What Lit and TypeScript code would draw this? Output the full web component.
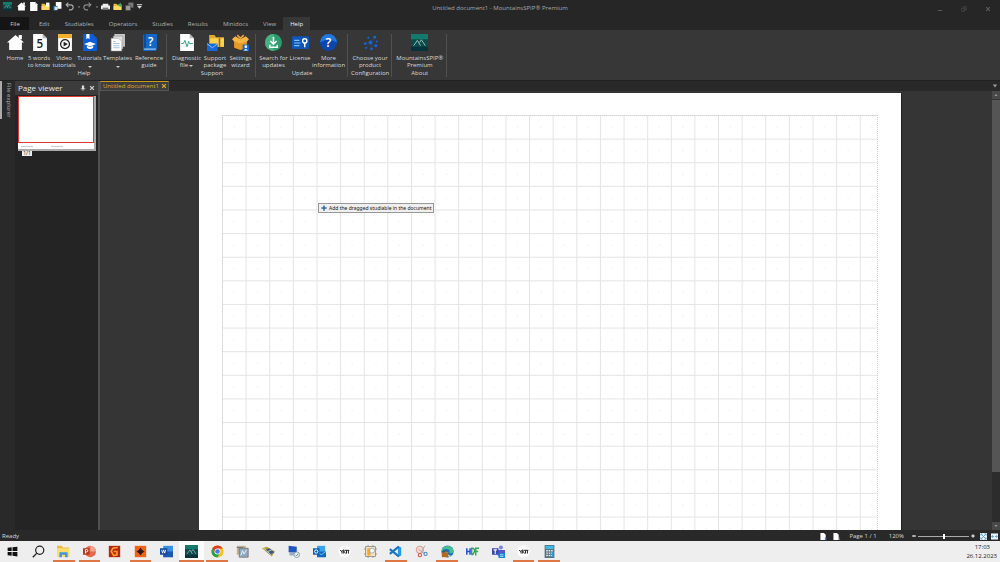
import { LitElement, html, svg, css, nothing } from "lit";
import { customElement, property } from "lit/decorators.js";
import { classMap } from "lit/directives/class-map.js";
import { styleMap } from "lit/directives/style-map.js";

const doc = svg`<path d="M2 0h9l4 4v12H2z" fill="#fff"/><path d="M11 0v4h4z" fill="#b8b8b8"/>`;
const folder = svg`<path d="M1 3h5l2 2h7v9H1z" fill="#e9b93c"/><path d="M1 7h14v7H1z" fill="#ffd866"/>`;
const peaks = svg`<rect width="16" height="16" fill="#0c4a4c"/><path d="M0 0h16v5H0z" fill="#147a6c"/><path d="M0 12h16v4H0z" fill="#07343c"/><path d="M2.500 11L6 6l3 5M8 8l1.800-2.500L13.500 11" fill="none" stroke="#a9cfc8" stroke-width=".8"/>`;
const artmark = svg`<circle cx="8" cy="8" r="7.5" fill="#fff"/><path d="M2.500 6.500L5 8v2.500M4.500 8L7 6v4.500M7 7.500l2.500 3M8 6.500h6M10.500 6.500v4M12.800 6.500v4" fill="none" stroke="#222" stroke-width="1.2"/>`;

const icons: Record<string, unknown> = {
  app: peaks,
  home: svg`<path d="M8 1L0 8h2v7h12V8h2z" fill="#fff"/><path d="M11 1h3v4h-3z" fill="#fff"/>`,
  doc,
  open: svg`${folder}<path d="M9 1h6v7H9z" fill="#fff"/>`,
  openDoc: svg`<path d="M5 0h10v12H5z" fill="#fff"/><path d="M1 7h7v8H1z" fill="#3f87c7"/><path d="M3 9h5v5H3z" fill="#d9eaf8"/>`,
  undo: svg`<path d="M2 5h8a4.500 4.500 0 0 1 0 9H7M6 1L2 5l4 4" fill="none" stroke="#aaa" stroke-width="2"/>`,
  redo: svg`<path d="M14 5H6a4.500 4.500 0 0 0 0 9h3M10 1l4 4-4 4" fill="none" stroke="#888" stroke-width="2"/>`,
  caret: svg`<path d="M3 6h10l-5 6z" fill="#999"/>`,
  print: svg`<path d="M3 3h10v3h3v7H0V6h3z" fill="#eee"/><path d="M3 10h10v4H3z" fill="#777"/>`,
  folderGo: svg`${folder}<path d="M9 5l5-4v3h2v4h-4z" fill="#3ba55a"/>`,
  windows: svg`<path d="M6 1h9v9H6z" fill="#777"/><path d="M1 6h9v9H1z" fill="#999" stroke="#444"/>`,
  more: svg`<path d="M2 2h12v2H2zM2 6h12l-6 7z" fill="#ddd"/>`,
  five: svg`${doc}<text x="8.4" y="13" font-size="11" font-weight="600" text-anchor="middle" fill="#222">5</text>`,
  video: svg`<path d="M2 0h13v16H2z" fill="#fff"/><path d="M2 0h13v4H2z" fill="#f2b32b"/><circle cx="8.500" cy="9.500" r="4.2" fill="none" stroke="#222" stroke-width="1.2"/><path d="M7.200 7.2v4.6l4-2.3z" fill="#222"/>`,
  tutorials: svg`<path d="M2 0h9l4 4v12H2z" fill="#0a5fd8"/><path d="M5 0h3v5l-1.500-1.3L5 5z" fill="#fff"/><path d="M3 9.500l5.500-2.300L14 9.500l-5.500 2.300z" fill="#fff"/><path d="M5.500 11v2c2 1.500 4 1.500 6 0v-2l-3 1.300z" fill="#fff"/>`,
  templates: svg`<path d="M5 0h10v12H5z" fill="#c9c9c9"/><path d="M4 2h9v12H4z" fill="#e0e0e0" stroke="#888" stroke-width=".5"/><path d="M2 4h7l3 3v9H2z" fill="#fff" stroke="#999" stroke-width=".5"/><path d="M4 7h2M4 9h6M4 11h6M4 13h6" stroke="#9fc3e0"/>`,
  reference: svg`<path d="M2 1l2-1h11v14l-1 2H2z" fill="#1568c8"/><path d="M3 13.500h11v1.500H3z" fill="#7fb0e6"/><path d="M3 0h1.500v13H3z" fill="#0b4590"/><text x="9.200" y="11" font-size="11" font-weight="600" text-anchor="middle" fill="#fff">?</text>`,
  diagnostic: svg`${doc}<path d="M3 9h2l1.500-3L8.500 12 10 7l1 2h3" fill="none" stroke="#23a274" stroke-width=".9"/>`,
  support: svg`<path d="M2 1h5l1.500 2H16v9H2z" fill="#e2a92c"/><path d="M3 4h13v8H3z" fill="#ffd04d"/><path d="M11 4h1.500v8H11z" fill="#8c6b20"/><path d="M0 9h10v7H0z" fill="#1668d6"/><path d="M0 9l5 4 5-4" fill="none" stroke="#bdd9ff" stroke-width=".7"/>`,
  settings: svg`<path d="M2 6l6 2 6-2v7l-6 2-6-2z" fill="#e79a25"/><path d="M8 5L3 2 0 5l2 2 6 2zM8 5l5-3 3 3-2 2-6 2z" fill="#f7b545"/><path d="M5 1l3 3 3-3" stroke="#f0a535" stroke-width="1.500" fill="none"/><path d="M10 10h6v6h-6z" fill="#1663ca"/><circle cx="13" cy="12" r="1.300" fill="#fff"/><path d="M11 15.500q2-3 4 0z" fill="#fff"/>`,
  search: svg`<circle cx="8" cy="8" r="8" fill="#2c9c6c"/><path d="M8 0a8 8 0 0 0 0 16z" fill="#46b383"/><path d="M8 2.500V9M5 6.500l3 3 3-3" fill="none" stroke="#fff" stroke-width="1.400"/><path d="M4.500 10v2.500h7V10" fill="none" stroke="#fff" stroke-width="1.300"/>`,
  license: svg`<rect y="2" width="16" height="12" rx="1" fill="#0d55b8"/><path d="M2 6h5M2 8.500h6M2 11h5" stroke="#7fc0ff" stroke-width="1.100"/><circle cx="12" cy="6.500" r="2" fill="none" stroke="#fff" stroke-width="1.300"/><path d="M12 8.500v4" stroke="#fff" stroke-width="1.300"/>`,
  info: svg`<circle cx="8" cy="8" r="8" fill="#0a46ae"/><path d="M0 8a8 8 0 0 1 16 0q-8-5-16 0" fill="#2377dc"/><text x="8" y="12.500" font-size="12" font-weight="600" text-anchor="middle" fill="#fff">?</text>`,
  config: svg`<path d="M3 9l5-1 4-5M8 8l4 4M8 8l1 6" stroke="#0d4fb0" stroke-width=".6" fill="none"/><g fill="#1465dc"><circle cx="8" cy="8" r="1.800"/><circle cx="3" cy="9" r="1.300"/><circle cx="12" cy="3" r="1.400"/><circle cx="13" cy="11" r="1.400"/><circle cx="6" cy="3.500" r="1"/><circle cx="9" cy="14" r="1.200"/><circle cx="4" cy="13" r="1"/><circle cx="14" cy="7" r=".9"/></g>`,
  mountains: peaks,
  start: svg`<path d="M2 3.500l5-.7v4.700H2zM8 2.700l6-.7v5.500H8zM2 8.500h5v4.700l-5-.7zM8 8.500h6V14l-6-.7z" fill="#111"/>`,
  find: svg`<circle cx="9.500" cy="6.500" r="5" fill="none" stroke="#222" stroke-width="1.500"/><path d="M6 10l-5 5" stroke="#222" stroke-width="1.700"/>`,
  explorer: svg`<path d="M0 1h6l1 2h8v11H0z" fill="#f0b93a"/><path d="M0 4h15v10H0z" fill="#ffdc70"/><path d="M3 15V9h10v6h-3v-3H6v3z" fill="#3b96dd"/>`,
  powerpoint: svg`<circle cx="9" cy="8" r="7" fill="#e8694a"/><path d="M9 1a7 7 0 0 1 7 7H9z" fill="#f4a58d"/><rect y="4" width="8" height="8" fill="#b8371b"/><path d="M3 10.500V5.500h1.500a1.400 1.400 0 0 1 0 3H3" fill="none" stroke="#fff" stroke-width="1.200"/>`,
  gwyddion: svg`<rect x="1" y="1" width="14" height="14" fill="#b9250c"/><path d="M12 3L6 4 4 8l3 5 4-1V8H7" fill="none" stroke="#ff9c32" stroke-width="2"/>`,
  origin: svg`<rect x="1" y="1" width="14" height="14" fill="#ee6414"/><path d="M8 3l2 3 3 2-3 2-2 3-2-3-3-2 3-2z" fill="#2b1b14"/><circle cx="8" cy="8" r="2.500" fill="#2b1b14"/>`,
  word: svg`<path d="M4 1h12v14H4z" fill="#3d8fe0"/><path d="M4 8h12v7H4z" fill="#1c57b0"/><rect y="4" width="9" height="8" fill="#174a9c"/><path d="M2 6l1.200 4L4.500 6l1.300 4L7 6" fill="none" stroke="#fff"/>`,
  chrome: svg`<circle cx="8" cy="8" r="7.500" fill="#fbc116"/><path d="M1.500 4.300A7.500 7.500 0 0 1 14.500 4.300H8L5 10z" fill="#e33b2e"/><path d="M1.500 4.300A7.500 7.500 0 0 0 8 15.500l3.500-6L8 11 4.800 9.800z" fill="#2ba24c"/><circle cx="8" cy="8" r="3.600" fill="#fff"/><circle cx="8" cy="8" r="2.800" fill="#3f7de8"/>`,
  maps: svg`<path d="M1 1h11v11H1z" fill="#c5b48b"/><path d="M4 4h11v11H4z" fill="#8caac4" stroke="#776f66"/><path d="M6 13l2-6 2 4 3-5" fill="none" stroke="#fff"/><path d="M1 3h8" stroke="#566c8a"/>`,
  layers: svg`<path d="M0 4l6-2 10 6-4 6z" fill="#b9993f"/><path d="M4 6l5-2 6 5-5 3z" fill="#315a9b"/><path d="M1 3l10 9M7 8l5-2" stroke="#efe2a0"/>`,
  monitor: svg`<path d="M2 1l10 1v8L2 9z" fill="#2156c4"/><path d="M3 9h7l3 4H3z" fill="#9cabc4"/><circle cx="12" cy="12" r="3.500" fill="#e8edf3" stroke="#8794a6"/><path d="M10.500 12l1.300 1.300L14 10.500" stroke="#32945c" fill="none"/>`,
  outlook: svg`<path d="M5 1h10v14H5z" fill="#39a4e8"/><path d="M5 8h11v7H5z" fill="#1268be"/><path d="M5 8l5 4 6-4" fill="none" stroke="#8dd0fa"/><rect y="4" width="8" height="8" fill="#0b61b5"/><circle cx="4" cy="8" r="2" fill="none" stroke="#fff" stroke-width="1.200"/>`,
  art: artmark,
  frame: svg`<rect x="2" y="2" width="12" height="12" fill="#f1e5c3" stroke="#888"/><path d="M4 4h4v9H4z" fill="#eeaa35"/><circle cx="10" cy="7" r="3" fill="#fff" stroke="#8aa5bd"/><path d="M0 5h2M0 11h2M14 5h2M14 11h2M5 0v2M11 0v2M5 14v2M11 14v2" stroke="#888"/>`,
  code: svg`<path d="M11 1l4 2v10l-4 2z" fill="#279be9"/><path d="M12 2L1 11M12 14L1 5" stroke="#1478c4" stroke-width="2.600"/>`,
  snip: svg`<circle cx="6" cy="6" r="4.500" fill="#f4dcd8" stroke="#d98579"/><path d="M12 1L7 10M4 5l8 6" stroke="#a9a9ad" stroke-width="1.200"/><circle cx="6" cy="12.500" r="2" fill="none" stroke="#d55545" stroke-width="1.300"/><circle cx="13" cy="11" r="2" fill="none" stroke="#4b86c2" stroke-width="1.300"/>`,
  edge: svg`<circle cx="8" cy="8" r="7.500" fill="#1674c4"/><path d="M1 6a7.500 7.500 0 0 1 14.500 2q-1 3-5 2 1-5-4-5Q3 5 1 8z" fill="#46c08e"/><path d="M6 7q-2 5 3 7 3 1 5-1-6 1-6-4z" fill="#dff1fb"/><path d="M1 9h8v6H1z" fill="#b36a1d"/><path d="M3 9V7.500h4V9" fill="none" stroke="#6f3d0d"/>`,
  hdf: svg`<path d="M0 3h7l-2 10H0z" fill="#e5ebfb"/><path d="M1 4v8M5 4v8M1 8h4" stroke="#1f4fd0" stroke-width="1.800"/><path d="M7 12V4q5 0 3 5-1 3-3 3" fill="none" stroke="#2c9d54" stroke-width="1.600"/><path d="M12 13V4h4M12 8h3" fill="none" stroke="#32ad52" stroke-width="1.800"/>`,
  teams: svg`<circle cx="11" cy="3" r="2.500" fill="#7b83eb"/><path d="M7 6h9v6q-4 5-9 1z" fill="#5059c9"/><rect x="0" y="4" width="8" height="8" fill="#3d47ae"/><path d="M2 6h4M4 6v5" stroke="#fff" stroke-width="1.300"/><rect x="8" y="10" width="8" height="6" fill="#1686d8"/><path d="M10 12h4M10 14h4" stroke="#fff" stroke-width=".8"/>`,
  calc: svg`<path d="M2 0h12v16H2z" fill="#54727e"/><path d="M3 1h10v4H3z" fill="#45b9e6"/><path d="M4 7h8M4 10h8M4 13h8" stroke="#e3eaed" stroke-width="1.800" stroke-dasharray="2 1"/><path d="M11 9h2v6h-2z" fill="#2c9dd5"/>`,
  docOut: svg`<path d="M1 0h8l4 4v12H1z" fill="#fff"/><path d="M11 11h4v4h-4z" fill="#2f6fba"/>`,
  docList: svg`<path d="M1 0h8l4 4v12H1z" fill="#fff"/><path d="M15 10v2M15 13v3" stroke="#aaa" stroke-width="1.500"/>`,
  fit: svg`<path d="M0 0h16v16H0z" fill="#e9f3f8"/><path d="M2 6V2h4M10 2h4v4M14 10v4h-4M6 14H2v-4M3 3l10 10M13 3L3 13" fill="none" stroke="#3f88b5" stroke-width="1.500"/>`,
  fitWidth: svg`<path d="M0 1h16v14H0z" fill="#e9f3f8"/><path d="M2 8h5M9 8h5M4 5L1 8l3 3M12 5l3 3-3 3" fill="none" stroke="#3f88b5" stroke-width="1.600"/>`,
  min: svg`<path d="M2 12h12" stroke="#5a5a5a" stroke-width="2.500"/>`,
  restore: svg`<path d="M2 6h8v8H2zM6 6V2h8v8h-4" fill="none" stroke="#555" stroke-width="1.500"/>`,
  close: svg`<path d="M3 3l10 10M13 3L3 13" fill="none" stroke="currentColor" stroke-width="3"/>`,
  pin: svg`<path d="M5 1h6v8H5zM2 9h12v2H2zM7 11h2v5H7z" fill="#ddd"/>`,
  plus: svg`<path d="M8 1v14M1 8h14" stroke="currentColor" stroke-width="4"/>`,
  minus: svg`<path d="M1 8h14" stroke="currentColor" stroke-width="5"/>`,
  up: svg`<path d="M2 12h12L8 4z" fill="#999"/>`,
  down: svg`<path d="M2 4h12l-6 8z" fill="#999"/>`,
};

@customElement("ui-icon")
export class UiIcon extends LitElement {
  static styles = css`
    :host { display: inline-block; width: 9px; height: 9px; flex: none; }
    .glyph { display: block; width: 100%; height: 100%; overflow: visible; font-family: "Open Sans", sans-serif; }
  `;
  @property() name = "";
  render() {
    return html`<svg class="glyph" viewBox="0 0 16 16" aria-hidden="true">${icons[this.name]}</svg>`;
  }
}

interface Command { icon: string; lines: string[]; width: number; menu?: boolean; inlineMenu?: boolean; }
interface Group { title: string; commands: Command[]; }

const groups: Group[] = [
  { title: "Help", commands: [
    { icon: "home", lines: ["Home"], width: 24 },
    { icon: "five", lines: ["5 words", "to know"], width: 24 },
    { icon: "video", lines: ["Video", "tutorials"], width: 26 },
    { icon: "tutorials", lines: ["Tutorials"], width: 25, menu: true },
    { icon: "templates", lines: ["Templates"], width: 31, menu: true },
    { icon: "reference", lines: ["Reference", "guide"], width: 32 },
  ] },
  { title: "Support", commands: [
    { icon: "diagnostic", lines: ["Diagnostic", "file"], width: 31, inlineMenu: true },
    { icon: "support", lines: ["Support", "package"], width: 26 },
    { icon: "settings", lines: ["Settings", "wizard"], width: 25 },
  ] },
  { title: "Update", commands: [
    { icon: "search", lines: ["Search for", "updates"], width: 29 },
    { icon: "license", lines: ["License"], width: 24 },
    { icon: "info", lines: ["More", "information"], width: 33 },
  ] },
  { title: "Configuration", commands: [{ icon: "config", lines: ["Choose your", "product"], width: 38 }] },
  { title: "About", commands: [{ icon: "mountains", lines: ["MountainsSPIP®", "Premium"], width: 49 }] },
];

const quick = ["home", "doc", "open", "openDoc", "undo", "caret", "redo", "caret", "print", "folderGo", "windows", "more"];
const tabs = ["File", "Edit", "Studiables", "Operators", "Studies", "Results", "Minidocs", "View", "Help"];
const tasks: [string, string][] = [
  ["start", ""], ["find", ""], ["explorer", "open"], ["powerpoint", "open"], ["gwyddion", ""], ["origin", "open"],
  ["word", ""], ["app", "current"], ["chrome", "open"], ["maps", ""], ["layers", ""], ["monitor", ""], ["outlook", ""],
  ["art", ""], ["frame", ""], ["code", "open"], ["snip", ""], ["edge", "open"], ["hdf", ""], ["teams", ""],
  ["art", "open"], ["calc", "open"],
];

@customElement("app-root")
export class AppRoot extends LitElement {
  static styles = css`
    :host { display: flex; flex-direction: column; height: 100vh; overflow: hidden; background: #262626; color: #d8d8d8; font: 6px/7px "Open Sans", "Noto Sans", sans-serif; }
    * { box-sizing: border-box; }
    button { background: none; border: 0; padding: 0; margin: 0; color: inherit; font: inherit; display: flex; align-items: center; justify-content: center; }
    .titlebar { display: grid; grid-template-columns: 1fr auto 1fr; align-items: center; height: 17px; flex: none; }
    .quick { display: flex; align-items: center; gap: 3px; padding: 0 0 4px 3px; }
    .brand { margin-right: 2px; }
    .quick .slim { width: 5px; margin: 0 -1px; }
    .slim ui-icon { width: 4px; height: 4px; }
    .quick .last { margin-left: -1px; }
    .last ui-icon { width: 7px; height: 7px; }
    .title { color: #a8a8a8; font-size: 6px; font-weight: 400; margin: 0; }
    .controls { display: flex; justify-content: flex-end; gap: 18px; padding-right: 9px; color: #5a5a5a; }
    .controls ui-icon { width: 6px; height: 6px; }
    .tabs { display: flex; height: 13px; flex: none; }
    .tab { padding: 1px 7px 0 8px; color: #b0b0b0; }
    .tab.file { background: #151515; width: 29px; margin-right: 2px; color: #ccc; }
    .tab.active { background: #373737; color: #f2f2f2; padding: 1px 7px 0; }
    .ribbon { display: flex; height: 51px; flex: none; background: #373737; border-bottom: 1px solid #222; padding: 4px 0 3px 3px; }
    .group { display: flex; flex-direction: column; border-right: 1px solid #505050; padding: 0 1px 0 0; margin-right: 4px; }
    .group + .group { margin-right: 3px; padding-right: 2px; }
    .commands { display: flex; flex: 1; }
    .command { flex-direction: column; justify-content: flex-start; white-space: nowrap; }
    .command ui-icon { width: 17px; height: 17px; margin-bottom: 4px; }
    .line { display: flex; align-items: center; gap: 1px; }
    .group-title { margin: 0; font-size: 6px; font-weight: 400; text-align: center; line-height: 7px; }
    .arrow { display: block; border: solid transparent; border-width: 2px 2px 0; border-top-color: #c8c8c8; width: 4px; margin-top: 4px; }
    .line .arrow { margin-top: 0; }
    .workspace { display: flex; flex: 1; min-height: 0; }
    .rail { width: 15px; flex: none; background: #292929; }
    .rail-tab { writing-mode: vertical-rl; height: 38px; width: 15px; border-left: 2px solid #aaa; color: #b0b0b0; }
    .viewer { width: 83px; flex: none; background: #242424; }
    .viewer-head { display: flex; align-items: center; height: 14px; background: #3c3c3c; padding: 0 3px; gap: 3px; }
    .viewer-title { flex: 1; margin: 0; color: #e6e6e6; font-size: 8px; line-height: 10px; font-weight: 400; }
    .viewer-head ui-icon { width: 6px; height: 6px; }
    .thumb { margin: 1px 2px 0 3px; height: 55px; background: #fff; border-right: 2px solid #aaa; border-bottom: 2px solid #aaa; }
    .thumb-sheet { height: 47px; border: 1px solid #e03b30; }
    .thumb-foot { display: flex; gap: 18px; padding: 3px 3px; }
    .rule { width: 12px; height: 1px; background: #ccc; }
    .thumb-label { display: block; width: 10px; margin-left: 7px; background: #eee; color: #222; text-align: center; line-height: 5px; font-size: 5px; }
    .document { display: flex; flex-direction: column; flex: 1; min-width: 0; border-left: 2px solid #505050; background: #353535; }
    .doc-tabs { display: flex; justify-content: space-between; align-items: center; height: 10px; background: #292929; flex: none; padding-right: 2px; }
    .doc-tab { display: flex; align-items: center; gap: 2px; height: 10px; border: 1px solid #555; border-top-color: #c69a1c; background: #3e3e3e; color: #dfb024; padding: 0 1px 0 2px; }
    .doc-tabs ui-icon { width: 6px; height: 6px; }
    .canvas { display: grid; grid-template-columns: 8px 1fr 8px; flex: 1; min-height: 0; }
    .sheet { position: relative; margin: 2px auto 0; width: calc(100% - 182px); padding: 22px 23px 0; background: #fff; box-shadow: 1px 0 #222; overflow: hidden; grid-column: 2; }
    .grid { display: block; width: 100%; height: 100%; }
    .tip { position: absolute; left: 119px; top: 110px; display: flex; align-items: center; gap: 2px; height: 10px; padding: 0 2px; border: 1px solid #999; background: #efefef; color: #111; white-space: nowrap; font: 5px/7px "Noto Sans", sans-serif; }
    .tip ui-icon { width: 6px; height: 6px; color: #2c6aa8; }
    .scroll { display: flex; flex-direction: column; background: #2c2c2c; }
    .scroll-button { height: 8px; flex: none; background: #484848; }
    .scroll-button ui-icon { width: 4px; height: 4px; }
    .scroll-thumb { height: 85%; background: #555; border-top: 1px solid #333; }
    .scroll-gap { flex: 1; }
    .status { display: flex; align-items: center; height: 11px; flex: none; background: #292929; padding: 1px 2px 0; color: #d8d8d8; }
    .status-text { flex: 1; }
    .status-tools { display: flex; align-items: center; }
    .status-tools ui-icon { width: 7px; height: 7px; }
    .status-tools .zoom-step ui-icon { width: 4px; height: 4px; color: #fff; }
    .pages { display: flex; gap: 6px; margin-right: 9px; }
    .zoom-value { margin: 0 8px 0 12px; }
    .slider { appearance: none; width: 51px; height: 7px; margin: 0 2px; background: linear-gradient(#aaa, #aaa) center / 100% 1px no-repeat; }
    .slider::-webkit-slider-thumb { appearance: none; width: 2px; height: 5px; background: #fff; }
    .fits { display: flex; gap: 4px; margin-left: 5px; }
    .taskbar { display: flex; justify-content: space-between; height: 21px; flex: none; background: #eee; color: #222; }
    .tasks { display: grid; grid-template-columns: repeat(22, 1fr); width: 56.2%; margin: 0; padding: 0; list-style: none; }
    .task { display: flex; margin: 0 2px; }
    .task button { flex: 1; border-top: 2px solid transparent; border-bottom: 2px solid transparent; }
    .task ui-icon { width: 13px; height: 13px; }
    .task.open button { border-bottom-color: #df7744; }
    .task.current { background: #fbfbfb; margin: 0; }
    .task.current button { border-bottom-color: #df7744; }
    .clock { display: flex; flex-direction: column; justify-content: center; gap: 2px; text-align: right; padding-right: 3px; }
    .clock .time { padding-right: 7px; }
  `;

  private iconButton(name: string, label: string, cls = "") {
    return html`<button class=${cls} aria-label=${label}><ui-icon name=${name}></ui-icon></button>`;
  }

  private command(c: Command) {
    return html`<button class="command" style=${styleMap({ width: `${c.width}px` })}>
      <ui-icon name=${c.icon}></ui-icon>
      ${c.lines.map((l, i) => html`<span class="line">${l}${c.inlineMenu && i === 1 ? html`<i class="arrow"></i>` : nothing}</span>`)}
      ${c.menu ? html`<i class="arrow"></i>` : nothing}
    </button>`;
  }

  render() {
    return html`
      <header class="titlebar">
        <div class="quick">
          <ui-icon class="brand" name="app"></ui-icon>
          ${quick.map((q) => this.iconButton(q, q, q === "caret" ? "slim" : q === "more" ? "last" : ""))}
        </div>
        <h1 class="title">Untitled document1 - MountainsSPIP® Premium</h1>
        <div class="controls">
          ${this.iconButton("min", "Minimize")}${this.iconButton("restore", "Restore")}${this.iconButton("close", "Close")}
        </div>
      </header>
      <nav class="tabs">
        ${tabs.map((t) => html`<button class=${classMap({ tab: true, file: t === "File", active: t === "Help" })}>${t}</button>`)}
      </nav>
      <section class="ribbon">
        ${groups.map((g) => html`<div class="group">
          <div class="commands">${g.commands.map((c) => this.command(c))}</div>
          <h2 class="group-title">${g.title}</h2>
        </div>`)}
      </section>
      <main class="workspace">
        <aside class="rail"><button class="rail-tab">File explorer</button></aside>
        <aside class="viewer">
          <div class="viewer-head">
            <h2 class="viewer-title">Page viewer</h2>
            ${this.iconButton("pin", "Pin")}${this.iconButton("close", "Close")}
          </div>
          <div class="thumb">
            <div class="thumb-sheet"></div>
            <div class="thumb-foot"><div class="rule"></div><div class="rule"></div></div>
          </div>
          <span class="thumb-label">1/1</span>
        </aside>
        <section class="document">
          <div class="doc-tabs">
            <div class="doc-tab">Untitled document1 ${this.iconButton("close", "Close document")}</div>
            ${this.iconButton("down", "Documents")}
          </div>
          <div class="canvas">
            <div class="sheet">
              <svg class="grid" aria-hidden="true">
                <defs><pattern id="cells" width="23.62" height="23.62" patternUnits="userSpaceOnUse">
                  <path d="M.5 0v23.62M0 .5h23.62" stroke="#e4e4e4" fill="none"/>
                  <path d="M11.500 12h1" stroke="#e4e4e4"/>
                </pattern></defs>
                <rect width="100%" height="100%" fill="url(#cells)"/>
                <path d="M.5 0v3000M0 .5h3000" stroke="#d4d4d4" stroke-dasharray="1 1"/>
                <line x1="100%" x2="100%" y1="0" y2="100%" stroke="#d4d4d4" stroke-width="2" stroke-dasharray="1 1"/>
              </svg>
              <div class="tip" role="tooltip"><ui-icon name="plus"></ui-icon>Add the dragged studiable in the document</div>
            </div>
            <div class="scroll">
              ${this.iconButton("up", "Scroll up", "scroll-button")}
              <div class="scroll-thumb"></div><div class="scroll-gap"></div>
              ${this.iconButton("down", "Scroll down", "scroll-button")}
            </div>
          </div>
        </section>
      </main>
      <footer class="status">
        <span class="status-text">Ready</span>
        <div class="status-tools">
          <div class="pages">${this.iconButton("docOut", "Previous page")}${this.iconButton("docList", "Next page")}</div>
          <span>Page 1 / 1</span><span class="zoom-value">120%</span>
          ${this.iconButton("minus", "Zoom out", "zoom-step")}
          <input class="slider" type="range" aria-label="Zoom" min="0" max="100" value="50" />
          ${this.iconButton("plus", "Zoom in", "zoom-step")}
          <div class="fits">${this.iconButton("fit", "Fit page")}${this.iconButton("fitWidth", "Fit width")}</div>
        </div>
      </footer>
      <nav class="taskbar">
        <ul class="tasks">
          ${tasks.map(([n, s]) => html`<li class=${classMap({ task: true, open: s === "open", current: s === "current" })}>${this.iconButton(n, n)}</li>`)}
        </ul>
        <div class="clock"><span class="time">17:03</span><span>26.12.2023</span></div>
      </nav>
    `;
  }
}
